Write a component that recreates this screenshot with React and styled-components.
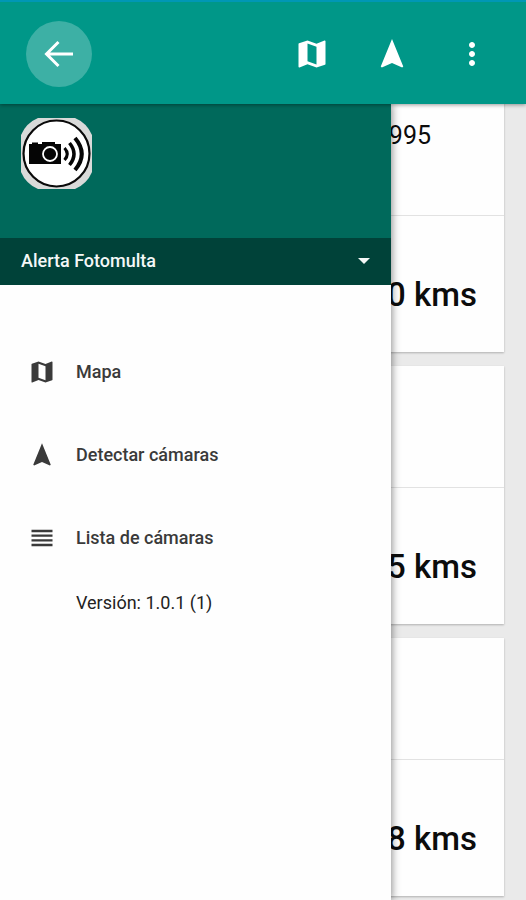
import React from "react";
import styled, { createGlobalStyle } from "styled-components";
import { MdMap, MdMoreVert, MdNavigation, MdReorder } from "react-icons/md";

const GlobalStyle = createGlobalStyle`
  *, *::before, *::after { box-sizing: border-box; }
  body { margin: 0; background: #eaeaea; }
  button { font: inherit; color: inherit; border: 0; padding: 0; background: none; cursor: pointer; }
`;

const Screen = styled.div`
  display: flex;
  flex-direction: column;
  height: 100vh;
  overflow: hidden;
  font-family: Roboto, "Liberation Sans", sans-serif;
  color: #0c0c0c;
`;

const Toolbar = styled.header`
  z-index: 2;
  flex: none;
  display: flex;
  align-items: center;
  height: 104px;
  padding: 2px 36px 0 26px;
  border-top: 2px solid #0097b5;
  background: #009788;
  color: #fff;
  box-shadow: 0 1px 4px rgba(0, 0, 0, 0.4);
`;

const BackButton = styled.button`
  display: grid;
  place-items: center;
  width: 66px;
  height: 66px;
  margin-right: auto;
  border-radius: 50%;
  background: #3db0a5;
`;

const Actions = styled.div`
  display: flex;
  gap: 44px;
`;

const ActionButton = styled.button`
  display: grid;
  place-items: center;
  width: 36px;
  height: 36px;
  font-size: 36px;
`;

const Body = styled.div`
  position: relative;
  flex: 1;
  min-height: 0;
`;

const CardList = styled.main`
  height: 100%;
  overflow: hidden;
  padding: 0 22px;
`;

const Cards = styled.div`
  display: grid;
  gap: 14px;
  margin-top: -10px;
`;

const Card = styled.article`
  background: #fefefe;
  box-shadow: 0 1px 2px rgba(0, 0, 0, 0.25);
`;

const CardTop = styled.div`
  height: 122px;
  padding: 27px 73px 0 24px;
  border-bottom: 1px solid #e2e2e2;
  font-size: 25px;
  line-height: 30px;
  text-align: right;
`;

const Distance = styled.div`
  height: 136px;
  padding: 59px 27px 0 24px;
  font-size: 33px;
  font-weight: 500;
  line-height: 40px;
  text-align: right;
`;

const Drawer = styled.aside`
  position: absolute;
  top: 0;
  bottom: 0;
  left: 0;
  width: calc(100% - 135px);
  background: #fefefe;
  box-shadow: 1px 0 8px rgba(0, 0, 0, 0.45);
`;

const Profile = styled.div`
  height: 134px;
  padding: 14px 21px;
  background: #00695b;
`;

const AccountButton = styled.button`
  display: flex;
  align-items: center;
  justify-content: space-between;
  width: 100%;
  height: 47px;
  padding: 0 21px 2px;
  background: #004239;
  color: #f4f8f7;
  font-size: 18px;
  font-weight: 500;
`;

const Menu = styled.nav`
  padding-top: 45px;
`;

const MenuItem = styled.button`
  display: flex;
  align-items: center;
  gap: 20px;
  width: 100%;
  height: 83px;
  padding: 0 28px;
  color: #3a3a3a;
  font-size: 18px;
  font-weight: 500;

  svg { flex: none; font-size: 28px; }
`;

const Version = styled.p`
  margin: 0;
  padding: 0 28px 0 76px;
  color: #222;
  font-size: 18px;
  line-height: 48px;
`;

const BackArrow = () => (
  <svg width="30" height="28" viewBox="0 0 30 28" fill="none" stroke="currentColor" strokeWidth="3" aria-hidden="true">
    <path d="M14.5 2L2.5 14L14.5 26M2.5 14H29" />
  </svg>
);

const Caret = () => (
  <svg width="12" height="7" viewBox="0 0 12 7" fill="currentColor" aria-hidden="true">
    <path d="M0 1H12L6 7Z" />
  </svg>
);

const CameraLogo = () => (
  <svg width="71" height="71" viewBox="0 0 71 71" role="img" aria-label="Alerta Fotomulta">
    <path d="M17 0H54Q66 5 71 17V54Q66 66 54 71H17Q5 66 0 54V17Q5 5 17 0Z" fill="#d9dad9" />
    <circle cx="35.5" cy="35.5" r="33" fill="#fff" stroke="#0a0a0a" strokeWidth="2.2" />
    <path d="M8 26H11V24.5H17V26H21V24H34V26H40V46H8Z" fill="#050505" />
    <circle cx="29" cy="36" r="7" fill="#050505" stroke="#fff" strokeWidth="1.8" />
    <g fill="none" stroke="#050505">
      <path d="M43.5 30Q49 36 43.5 42" strokeWidth="3" />
      <path d="M48.5 25Q57.5 36 48.5 47" strokeWidth="3.5" />
      <path d="M54 20Q67.5 36 54 52" strokeWidth="4" />
    </g>
  </svg>
);

const cards = [
  { reading: "995", distance: "0 kms" },
  { reading: "", distance: "5 kms" },
  { reading: "", distance: "8 kms" },
];

const menu = [
  { label: "Mapa", Icon: MdMap },
  { label: "Detectar cámaras", Icon: MdNavigation },
  { label: "Lista de cámaras", Icon: MdReorder },
];

export default function App() {
  return (
    <Screen>
      <GlobalStyle />
      <Toolbar>
        <BackButton aria-label="Volver"><BackArrow /></BackButton>
        <Actions>
          <ActionButton aria-label="Mapa"><MdMap /></ActionButton>
          <ActionButton aria-label="Detectar cámaras"><MdNavigation /></ActionButton>
          <ActionButton aria-label="Más opciones"><MdMoreVert /></ActionButton>
        </Actions>
      </Toolbar>
      <Body>
        <CardList>
          <Cards>
            {cards.map(({ reading, distance }) => (
              <Card key={distance}>
                <CardTop>{reading}</CardTop>
                <Distance>{distance}</Distance>
              </Card>
            ))}
          </Cards>
        </CardList>
        <Drawer>
          <Profile><CameraLogo /></Profile>
          <AccountButton>
            Alerta Fotomulta
            <Caret />
          </AccountButton>
          <Menu>
            {menu.map(({ label, Icon }) => (
              <MenuItem key={label}>
                <Icon aria-hidden="true" />
                {label}
              </MenuItem>
            ))}
            <Version>Versión: 1.0.1 (1)</Version>
          </Menu>
        </Drawer>
      </Body>
    </Screen>
  );
}
